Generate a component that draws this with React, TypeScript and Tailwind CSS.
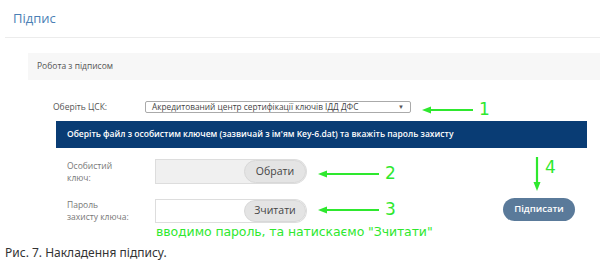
import React from 'react';

const green = '#2ee82e';

function ArrowLeft({ x, y, w, n }: { x: number; y: number; w: number; n: string }) {
  return (
    <div className="absolute flex items-center" style={{ left: x, top: y }}>
      <svg width={w} height="10" viewBox={`0 0 ${w} 10`}>
        <line x1="6" y1="5" x2={w} y2="5" stroke={green} strokeWidth="2.2" />
        <polygon points="0,5 9,1.5 9,8.5" fill={green} />
      </svg>
      <span className="ml-[6px] text-[17px] leading-none text-[#2ee82e] [font-family:'DejaVu_Sans',sans-serif]">{n}</span>
    </div>
  );
}

export default function App() {
  return (
    <div className="relative w-[600px] h-[267px] overflow-hidden bg-white [font-family:'Open_Sans','Liberation_Sans',sans-serif]">
      {/* Header */}
      <div className="ml-[5px] h-[38px] border-b border-[#ececec] pl-[8px] pt-[9px] text-[13px] leading-[18px] text-[#4b7fb5]">
        Підпис
      </div>

      {/* Panel heading */}
      <div className="ml-[28px] mt-[15px] h-[27px] bg-[#f7f7f7] pl-[9px] flex items-center text-[8.5px] text-[#555]">
        Робота з підписом
      </div>

      {/* CSK select */}
      <div className="mt-[21px] flex items-center h-[12px]">
        <span className="ml-[53px] w-[92px] text-[8.5px] text-[#555]">Оберіть ЦСК:</span>
        <div className="w-[266px] h-[12px] border border-[#aaa] rounded-[2px] bg-white flex items-center justify-between px-[6px] text-[8.3px] text-[#444] leading-none">
          <span>Акредитований центр сертифікації ключів ІДД ДФС</span>
          <span className="text-[6px] text-[#555]">▼</span>
        </div>
      </div>

      {/* Blue bar */}
      <div className="ml-[56px] mt-[8px] w-[531px] h-[27px] bg-[#093c74] flex items-center pl-[11px] text-[8.5px] font-semibold text-white">
        Оберіть файл з особистим ключем (зазвичай з ім'ям Key-6.dat) та вкажіть пароль захисту
      </div>

      {/* Form rows */}
      <div className="flex mt-[11px]">
        <div className="flex flex-col w-[310px]">
          <div className="flex items-center h-[25px]">
            <span className="ml-[67px] w-[88px] text-[8.5px] leading-[12px] text-[#777]">
              Особистий<br />ключ:
            </span>
            <div className="w-[152px] h-[25px] rounded-l-[4px] rounded-r-full border border-[#ddd] bg-[#f0f0f0] flex justify-end">
              <div className="w-[62px] h-full rounded-full bg-[#e4e4e4] border border-[#d8d8d8] flex items-center justify-center text-[10.5px] text-[#444]">
                Обрати
              </div>
            </div>
          </div>
          <div className="flex items-center h-[24px] mt-[15px]">
            <span className="ml-[67px] w-[88px] text-[8.5px] leading-[12px] text-[#777]">
              Пароль<br />захисту ключа:
            </span>
            <div className="w-[152px] h-[24px] rounded-l-[4px] rounded-r-full border border-[#ddd] bg-white flex justify-end">
              <div className="w-[62px] h-full rounded-full bg-[#e4e4e4] border border-[#d8d8d8] flex items-center justify-center text-[10.5px] text-[#444]">
                Зчитати
              </div>
            </div>
          </div>
          <div className="ml-[156px] mt-[1px] text-[12.5px] leading-[16px] tracking-[-0.1px] text-[#2ee82e] [font-family:'DejaVu_Sans',sans-serif] whitespace-nowrap">
            вводимо пароль, та натискаємо "Зчитати"
          </div>
        </div>
        <div className="ml-[193px] mt-[39px]">
          <div className="w-[72px] h-[23px] rounded-full bg-[#5a7a9a] flex items-center justify-center text-[9.5px] font-semibold text-white">
            Підписати
          </div>
        </div>
      </div>

      {/* Caption */}
      <div className="ml-[5px] mt-[4px] text-[12px] text-[#333] [font-family:'Noto_Sans',sans-serif]">
        Рис. 7. Накладення підпису.
      </div>

      {/* Annotations */}
      <ArrowLeft x={422} y={101} w={51} n="1" />
      <ArrowLeft x={318} y={165} w={61} n="2" />
      <ArrowLeft x={318} y={201} w={61} n="3" />
      <div className="absolute left-[532px] top-[157px] flex items-start">
        <svg width="10" height="34" viewBox="0 0 10 34">
          <line x1="5" y1="0" x2="5" y2="27" stroke={green} strokeWidth="2.2" />
          <polygon points="5,34 1.5,25 8.5,25" fill={green} />
        </svg>
        <span className="ml-[3px] mt-[2px] text-[17px] leading-none text-[#2ee82e] [font-family:'DejaVu_Sans',sans-serif]">4</span>
      </div>
    </div>
  );
}
